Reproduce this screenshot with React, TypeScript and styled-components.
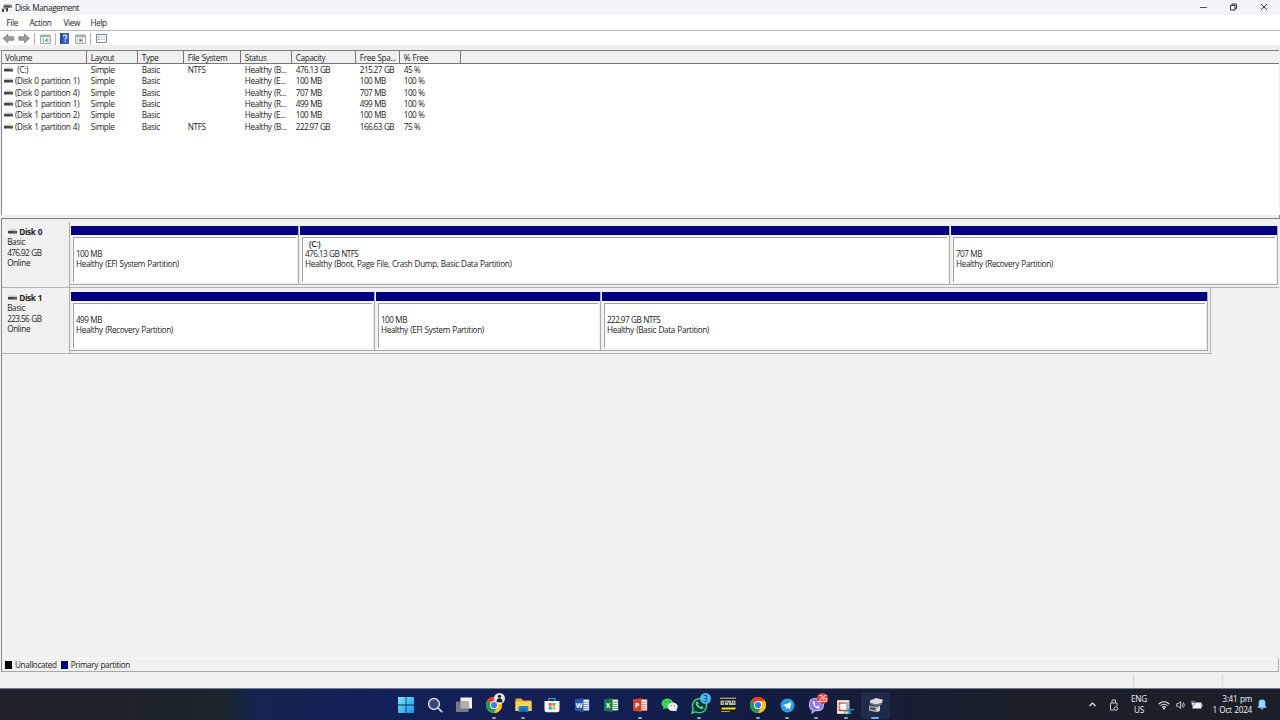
import React from 'react';
import styled, { createGlobalStyle, css } from 'styled-components';

const GlobalStyle = createGlobalStyle`
  * {
    box-sizing: border-box;
  }
  body {
    margin: 0;
    background: #f0f0f0;
    overflow: hidden;
  }
`;

const Screen = styled.div`
  width: 1280px;
  height: 720px;
  display: flex;
  flex-direction: column;
  background: #f0f0f0;
  color: #1c1c1c;
  font-family: 'Open Sans', 'Noto Sans', sans-serif;
  font-size: 8.2px;
  letter-spacing: -0.36px;
  word-spacing: 0.6px;
  line-height: 10px;
  white-space: nowrap;
`;

const TitleBar = styled.div`
  height: 15px;
  flex: none;
  display: flex;
  align-items: center;
  padding: 0 0 0 2px;
  background: #f3f4f7;
`;

const Title = styled.span`
  margin-left: 3px;
`;

const WindowButtons = styled.div`
  margin-left: auto;
  display: flex;
  align-items: center;
  gap: 20px;
  padding: 0 11px 1px 0;
`;

const MenuBar = styled.div`
  height: 16px;
  flex: none;
  display: flex;
  align-items: center;
  padding: 0 0 0 6.5px;
  background: #fff;
  border-bottom: 1px solid #bcbcbc;
`;

const MenuItem = styled.span<{ $width: number }>`
  width: ${(p) => p.$width}px;
`;

const Toolbar = styled.div`
  height: 14px;
  flex: none;
  display: flex;
  align-items: center;
  padding: 1px 0 0 2px;
  background: #fff;
`;

const Divider = styled.i`
  width: 1px;
  height: 12px;
  margin: 0 4.5px 0 4px;
  background: #b4b4b4;
`;

const HelpGroup = styled.span`
  display: flex;
  align-items: center;
  gap: 6px;
`;

const VolumeList = styled.div`
  height: 169px;
  flex: none;
  margin: 5px 1px 0 1px;
  border-top: 1px solid #7c7c7c;
  border-left: 1px solid #8a8a8a;
  background: #fff;
`;

const columns = css`
  display: grid;
  grid-template-columns: 85px 51px 46px 57px 51px 64px 44px 61px 1fr;
`;

const HeaderRow = styled.div`
  ${columns}
  height: 13px;
  background: #f0f0f0;
  border-bottom: 1px solid #777;
`;

const HeaderCell = styled.div`
  padding: 1.6px 0 0 3.8px;
  border-right: 1px solid #777;
  &:first-child {
    padding-left: 3px;
  }
  &:last-child {
    border-right: 0;
  }
`;

const VolumeRow = styled.div`
  ${columns}
  height: 11.35px;
  padding-top: 0.8px;
`;

const VolumeCell = styled.div<{ $tight?: boolean }>`
  padding-left: 3.8px;
  display: flex;
  align-items: center;
  letter-spacing: ${(p) => (p.$tight ? '-0.6px' : 'inherit')};
  &:first-child {
    padding-left: 2px;
    gap: 2px;
  }
`;

const Splitter = styled.div`
  height: 4px;
  flex: none;
  margin: -4px 0 0 1px;
  background: #f0f0f0;
  border-right: 1px solid #8a8a8a;
  border-bottom: 1px solid #7c7c7c;
`;

const DiskPane = styled.div`
  flex: 1;
  margin: 0 1px;
  padding-top: 3px;
  border-left: 1px solid #8a8a8a;
  display: flex;
  flex-direction: column;
`;

const DiskRow = styled.div<{ $width?: number }>`
  display: flex;
  height: 66px;
  width: ${(p) => (p.$width ? `${p.$width}px` : '100%')};
  border-bottom: 1px solid #b2b2b2;
  border-right: ${(p) => (p.$width ? '1px solid #b2b2b2' : '0')};
`;

const DiskLabel = styled.div`
  width: 68px;
  height: 65px;
  flex: none;
  padding: 5.4px 0 0 5.2px;
  border-right: 1px solid #aaa;
  background: #f0f0f0;
  line-height: 10.1px;
`;

const DiskName = styled.div`
  display: flex;
  align-items: center;
  gap: 2px;
  font-weight: 700;
  padding-left: 1px;
`;

const Size = styled.div`
  letter-spacing: -0.6px;
`;

const Partitions = styled.div`
  display: flex;
  padding-top: 4px;
`;

const Partition = styled.div<{ $width: number }>`
  width: ${(p) => p.$width}px;
  height: 59px;
  display: flex;
  flex-direction: column;
  border-right: 1px solid #ababab;
  border-bottom: 1px solid #ababab;
`;

const PartitionBar = styled.div`
  height: 9px;
  margin-left: 1px;
  background: #000080;
`;

const PartitionBody = styled.div`
  flex: 1;
  margin: 2px 2px 2px 3px;
  padding-left: 2px;
  border-top: 1px solid #a0a0a0;
  border-left: 1px solid #a0a0a0;
  outline: 1px solid #fbfbff;
  background: #fff;
  line-height: 10.2px;
`;

const PartitionName = styled.div`
  height: 11.2px;
  padding: 0.5px 0 0 4px;
  font-weight: 600;
`;

const Legend = styled.div`
  margin-top: auto;
  height: 14px;
  display: flex;
  align-items: center;
  padding-left: 3px;
  border-top: 1px solid #f8f8f8;
  border-bottom: 1px solid #a8a8a8;
  border-right: 1px solid #a8a8a8;
`;

const Swatch = styled.i<{ $color: string }>`
  width: 7px;
  height: 8px;
  margin-right: 3px;
  background: ${(p) => p.$color};
`;

const LegendText = styled.span`
  margin-right: 4px;
`;

const StatusBar = styled.div`
  height: 16px;
  flex: none;
  display: flex;
  justify-content: flex-end;
  padding: 2px 0 1px;
`;

const StatusPanel = styled.div<{ $width: number }>`
  width: ${(p) => p.$width}px;
  border-left: 1px solid #d4d4d4;
`;

const Taskbar = styled.div`
  height: 32px;
  flex: none;
  display: flex;
  align-items: center;
  padding: 1px 9px 0 391px;
  border-top: 1px solid #6f7c92;
  background: linear-gradient(90deg, #20212b 0, #1c242c 225px, #16244d 250px, #14215a 370px, #131f52 620px, #121c42 760px, #171d32 900px, #1b202b 1010px, #1b1f2a 100%);
  color: #f3f3f5;
`;

const TaskItem = styled.div<{ $active?: boolean }>`
  position: relative;
  width: 29.35px;
  height: 27px;
  flex: none;
  display: flex;
  align-items: center;
  justify-content: center;
  border-radius: 3px;
  background: ${(p) => (p.$active ? '#202a4c' : 'transparent')};
`;

const RunningMark = styled.i<{ $active?: boolean }>`
  position: absolute;
  bottom: 0;
  width: ${(p) => (p.$active ? 8 : 4)}px;
  height: 2px;
  border-radius: 1px;
  background: ${(p) => (p.$active ? '#67b8e8' : '#9aa0ae')};
`;

const Badge = styled.span<{ $color: string; $dark?: boolean }>`
  position: absolute;
  top: 1px;
  right: 3px;
  min-width: 11px;
  height: 11px;
  border-radius: 6px;
  background: ${(p) => p.$color};
  color: ${(p) => (p.$dark ? '#12304a' : '#fff')};
  font-size: 8.5px;
  line-height: 11px;
  text-align: center;
`;

const Tray = styled.div`
  margin-left: auto;
  display: flex;
  align-items: center;
  padding-bottom: 1px;
`;

const TrayText = styled.div<{ $width: number; $align: string }>`
  width: ${(p) => p.$width}px;
  display: flex;
  flex-direction: column;
  align-items: ${(p) => p.$align};
  line-height: 10.5px;
  letter-spacing: -0.25px;
`;

const TraySlot = styled.div<{ $width: number }>`
  width: ${(p) => p.$width}px;
  display: flex;
  justify-content: center;
`;

const DriveIcon = () => (
  <svg width="9" height="6" viewBox="0 0 9 6">
    <path d="M1 .5h7l1 1.500H0z" fill="#c3c6c4" />
    <path d="M0 2h9v2.500H0z" fill="#414745" />
    <path d="M6 2.500h2v1H6z" fill="#3d9b56" />
  </svg>
);

const AppIcon = () => (
  <svg width="10" height="10" viewBox="0 0 10 10">
    <path d="M2.500 1h6l1.300 2H1.500z" fill="#b4b7b7" />
    <path d="M1.500 2.600h8.300v2H1.500z" fill="#3b403e" />
    <path d="M.5 5h5l.8 1.400H0z" fill="#aaa" />
    <path d="M0 6h2v3H0zM4 5h2v3.500H4z" fill="#454a49" />
    <path d="M7.500 3h1.400v.9H7.500z" fill="#3fae5d" />
  </svg>
);

const Arrow = ({ right }: { right?: boolean }) => (
  <svg width="14" height="11" viewBox="0 0 14 11">
    <path
      d={right ? 'M13.500 5.500l-5-4.500v2.700H2.800v3.600h5.700V10z' : 'M1 5.500l5-4.500v2.700h5.700v3.600H6V10z'}
      fill="#9c9c9c"
      stroke="#7d7d7d"
      strokeWidth=".7"
    />
  </svg>
);

const PanelIcon = ({ right }: { right?: boolean }) => (
  <svg width="11" height="10" viewBox="0 0 11 10">
    <path d="M.5 1h10v8.500H.5z" fill="#f7f8f7" stroke="#8f979e" strokeWidth=".8" />
    <path d="M.5 1h10v2H.5z" fill="#a3adb7" />
    <path d={right ? 'M7.500 3.300v6M1.500 5h2M1.500 7h2' : 'M3.500 3.300v6M8.500 5H10M8.500 7H10M1.500 5h1M1.500 7h1'} stroke="#989fa6" strokeWidth=".8" />
    <path d={right ? 'M4.500 4v4.500L7.200 6.200z' : 'M7.500 4v4.500L4.800 6.200z'} fill="#45a145" />
  </svg>
);

const HelpIcon = () => (
  <svg width="9" height="11" viewBox="0 0 9 11">
    <path d="M0 0h9v11H0z" fill="#3c5fc0" />
    <path d="M0 0h2v11H0z" fill="#2b478f" />
    <path d="M3.400 3.600c0-2.200 3.300-2 3.300-.2 0 1.300-1.500 1.300-1.500 3M5.200 7.800v1.200" stroke="#fff" strokeWidth="1.100" fill="none" />
  </svg>
);

const ListIcon = () => (
  <svg width="11" height="9" viewBox="0 0 11 9">
    <path d="M.5.5h10v8H.5z" fill="#fff" stroke="#7f868c" />
    <path d="M2 3h1.500M2 5.500h1.500" stroke="#3f83d0" />
    <path d="M4.500 3H9M4.500 5.500H9" stroke="#c0ccd8" />
  </svg>
);

const Chrome = () => (
  <svg width="16" height="16" viewBox="0 0 16 16">
    <circle cx="8" cy="8" r="8" fill="#fbc116" />
    <path d="M8 8 1.070 4A8 8 0 0 1 14.930 4z" fill="#e33b2e" />
    <path d="M8 8 1.070 4A8 8 0 0 0 8 16l3.460-6z" fill="#229a4b" />
    <path d="M8 4h6.930A8 8 0 0 1 8 16l3.460-6z" fill="#fbc116" />
    <circle cx="8" cy="8" r="4" fill="#fff" />
    <circle cx="8" cy="8" r="3.100" fill="#3b7de8" />
  </svg>
);

const Office = ({ letter, dark, light }: { letter: string; dark: string; light: string }) => (
  <svg width="16" height="16" viewBox="0 0 16 16">
    <path d="M8 2.500h7v11H8z" fill="#f4f6f8" stroke={light} strokeWidth=".6" />
    <path d="M9.500 5.200h4.500M9.500 7.400h4.500M9.500 9.600h4.500M9.500 11.600h4.500" stroke={light} strokeWidth=".9" />
    <path d="M1 2.300 9.500 1v14L1 13.700z" fill={dark} />
    <text x="5.200" y="10.600" fill="#fff" fontSize="7" fontWeight="700" textAnchor="middle" letterSpacing="0">
      {letter}
    </text>
  </svg>
);

const StartIcon = () => (
  <svg width="16" height="16" viewBox="0 0 16 16">
    <defs>
      <linearGradient id="start" x1="0" y1="0" x2="1" y2="1">
        <stop offset="0" stopColor="#7ae4fb" />
        <stop offset="1" stopColor="#1497e8" />
      </linearGradient>
    </defs>
    <path d="M0 0h7.600v7.600H0zM8.400 0H16v7.600H8.400zM0 8.400h7.600V16H0zM8.400 8.400H16V16H8.400z" fill="url(#start)" />
  </svg>
);

const SearchIcon = () => (
  <svg width="16" height="16" viewBox="0 0 16 16">
    <circle cx="7" cy="7" r="5.400" fill="#3b4674" stroke="#d9dce4" strokeWidth="1.500" />
    <path d="m11 11 3.700 3.700" stroke="#d9dce4" strokeWidth="1.700" strokeLinecap="round" />
  </svg>
);

const TaskViewIcon = () => (
  <svg width="16" height="16" viewBox="0 0 16 16">
    <path d="M4.500 .5H16v11H4.500z" fill="#f0f0f1" />
    <path d="M0 4.500h12.500V15H0z" fill="#77797f" />
    <path d="M4.500 4.500h8v7h-8z" fill="#adaeb2" />
  </svg>
);

const FolderIcon = () => (
  <svg width="17" height="16" viewBox="0 0 17 16">
    <path d="M.5 1.500h6l1.500 2h8.500V14H.5z" fill="#eda928" />
    <path d="M.5 4.500h16V14H.5z" fill="#ffd35a" />
    <path d="M3.500 15V10.500q0-1.500 1.500-1.500h7q1.500 0 1.500 1.500V15z" fill="#1e80d0" />
    <path d="M5.500 12h6v3h-6z" fill="#1365ad" />
  </svg>
);

const StoreIcon = () => (
  <svg width="16" height="16" viewBox="0 0 16 16">
    <path d="M5 4V1.500h6V4" fill="none" stroke="#3ba7e5" strokeWidth="1.200" />
    <path d="M.5 4h15v9q0 2.300-2.300 2.300H2.800Q.5 15.300.5 13z" fill="#f4f5f7" />
    <path d="M4.800 6h2.900v2.900H4.800z" fill="#ea5a32" />
    <path d="M8.400 6h2.900v2.900H8.400z" fill="#7cb62d" />
    <path d="M4.800 9.600h2.900v2.900H4.800z" fill="#23a1e4" />
    <path d="M8.400 9.600h2.900v2.900H8.400z" fill="#f7b51a" />
  </svg>
);

const WeChatIcon = () => (
  <svg width="17" height="16" viewBox="0 0 17 16">
    <path d="M1.800 12.200 2.500 10A5.800 4.900 0 1 1 6 11.200z" fill="#3fd15c" />
    <ellipse cx="11.700" cy="9.800" rx="5" ry="4.200" fill="#e9eeec" />
    <path d="m15.500 11.500.2 3-2.800-1.300z" fill="#e9eeec" />
    <path d="M4.200 5h1.200M8 5h1.200" stroke="#17682d" strokeWidth="1.100" />
    <path d="M9.500 8.800h1M13 8.800h1" stroke="#69736e" />
  </svg>
);

const WhatsAppIcon = () => (
  <svg width="17" height="17" viewBox="0 0 17 17">
    <path d="m1 16 1.200-4.200A7 7 0 1 1 5 14.800z" fill="#14294b" stroke="#38d366" strokeWidth="1.500" />
    <path d="M5.500 4.600 7 4.500l.8 2-.8 1q.9 1.700 2.600 2.500l1-1.100 2 .9q.1 2.100-2 2.300C7.600 11.900 4.500 8.500 4.600 6z" fill="#45dc72" />
  </svg>
);

const ChartAppIcon = () => (
  <svg width="16" height="16" viewBox="0 0 16 16">
    <path d="M0 0h16v16H0z" fill="#16171a" />
    <path d="M0 1.200h16" stroke="#d8d8c0" />
    <path d="M.5 3.500h15v4.500H.5z" fill="#b9b9b5" />
    <path d="M4.500 3.500V8M8.500 5.500V8M11.500 3.500v2.500M2 5.800h1.500M6 5.200h1.500M13 5.800h1.500" stroke="#24252a" strokeWidth=".9" />
    <path d="M2 10.500h14l-1 2H1z" fill="#e7e321" />
    <path d="M1 14.500h9" stroke="#a5a430" strokeWidth="1.200" />
  </svg>
);

const TelegramIcon = () => (
  <svg width="15" height="15" viewBox="0 0 15 15">
    <circle cx="7.500" cy="7.500" r="7" fill="#2aa0da" />
    <path d="m2.800 7.300 8.600-3.400-1.500 7.500-2.600-1.800-1.300 1.300-.3-2.500z" fill="#fff" />
    <path d="m5.800 8.300 4-2.700-2.900 3.300" fill="#b5d8ec" />
  </svg>
);

const ViberIcon = () => (
  <svg width="17" height="17" viewBox="0 0 17 17">
    <path d="M8.500 1.200C3 1.200 1.500 3 1.500 7.500c0 3 .8 4.700 2.700 5.500v3l2.700-2.400c6.400.3 8.600-1.200 8.600-6.100 0-4.500-1.500-6.300-7-6.300z" fill="#8a76ee" stroke="#c4b9fb" strokeWidth="1.100" />
    <path d="m4.800 4.300 1.300-.2 1 2-.8 1q.8 1.800 2.500 2.500l1-.8 1.900 1.200-.5 1.500C7.800 12 4.300 8 4.800 4.300z" fill="#fff" />
    <path d="M9 4.300q3 .2 3.200 3.200" fill="none" stroke="#fff" />
  </svg>
);

const SnipIcon = () => (
  <svg width="17" height="21" viewBox="0 0 17 21">
    <path d="M.5 5.500h11.500v13H.5z" fill="#f6f1ef" stroke="#d0cfd4" />
    <path d="M2.500 8h7.500v7.500H2.500z" fill="#fff" stroke="#d64d35" strokeWidth="1.600" />
    <path d="M4.500 7v1.500M7.500 7v1.500M1.500 10.500h2M1.500 13h2" stroke="#fff" strokeWidth=".6" />
    <path d="M9 7h3v8H9z" fill="#a8b3bc" />
    <path d="M10.500 15 17 14.500M11 14.500l3 4.500" stroke="#2588c7" strokeWidth="1.600" />
    <circle cx="9.500" cy="17.500" r="1.700" fill="#e9f4fb" stroke="#2588c7" />
  </svg>
);

const DiskToolIcon = () => (
  <svg width="17" height="17" viewBox="0 0 17 17">
    <path d="m3 3.500 6-2.500 7 1.800-1.200 3.400-6.300 1.200-5.500-1.600z" fill="#d8dbdc" />
    <path d="m3 5.800 5.500 1.600 6.300-1.200v1.500L8.500 9 3 7.300z" fill="#767c80" />
    <path d="m2 8.500 8 1.200v5.500l-8-1.500z" fill="#9ca2a5" />
    <path d="m10 9.700 3-.9v5l-3 1.400z" fill="#d6d8d9" />
    <path d="m3.500 10.300 4.500.8v2l-4.500-.8z" fill="#40474b" />
  </svg>
);

const ProfileBadge = () => (
  <svg width="11" height="11" viewBox="0 0 10 10">
    <circle cx="5" cy="5" r="5" fill="#e8e8e8" />
    <circle cx="5" cy="3" r="1.500" fill="#202020" />
    <path d="M2.300 8.500q0-3.700 2.700-3.700t2.700 3.700z" fill="#202020" />
  </svg>
);

const ProfileSlot = styled.span`
  position: absolute;
  top: 1px;
  right: 3px;
  display: flex;
`;

const taskItems: {
  id: string;
  icon: React.ReactNode;
  running?: boolean;
  active?: boolean;
  overlay?: React.ReactNode;
}[] = [
  { id: 'start', icon: <StartIcon /> },
  { id: 'search', icon: <SearchIcon /> },
  { id: 'taskview', icon: <TaskViewIcon /> },
  { id: 'chrome-profile', icon: <Chrome />, running: true, overlay: <ProfileSlot><ProfileBadge /></ProfileSlot> },
  { id: 'explorer', icon: <FolderIcon />, running: true },
  { id: 'store', icon: <StoreIcon /> },
  { id: 'word', icon: <Office letter="W" dark="#2858a8" light="#5b86c9" /> },
  { id: 'excel', icon: <Office letter="X" dark="#16794a" light="#3c9a68" /> },
  { id: 'powerpoint', icon: <Office letter="P" dark="#cf4327" light="#df7157" />, running: true },
  { id: 'wechat', icon: <WeChatIcon /> },
  { id: 'whatsapp', icon: <WhatsAppIcon />, running: true, overlay: <Badge $color="#4db8ef" $dark>3</Badge> },
  { id: 'charts', icon: <ChartAppIcon /> },
  { id: 'chrome', icon: <Chrome />, running: true },
  { id: 'telegram', icon: <TelegramIcon />, running: true },
  { id: 'viber', icon: <ViberIcon />, running: true, overlay: <Badge $color="#e9433f">26</Badge> },
  { id: 'snip', icon: <SnipIcon />, running: true },
  { id: 'diskmgmt', icon: <DiskToolIcon />, running: true, active: true },
];

const headers = ['Volume', 'Layout', 'Type', 'File System', 'Status', 'Capacity', 'Free Spa...', '% Free', ''];

const volumes = [
  ['\u00a0(C:)', 'Simple', 'Basic', 'NTFS', 'Healthy (B...', '476.13 GB', '215.27 GB', '45 %'],
  ['(Disk 0 partition 1)', 'Simple', 'Basic', '', 'Healthy (E...', '100 MB', '100 MB', '100 %'],
  ['(Disk 0 partition 4)', 'Simple', 'Basic', '', 'Healthy (R...', '707 MB', '707 MB', '100 %'],
  ['(Disk 1 partition 1)', 'Simple', 'Basic', '', 'Healthy (R...', '499 MB', '499 MB', '100 %'],
  ['(Disk 1 partition 2)', 'Simple', 'Basic', '', 'Healthy (E...', '100 MB', '100 MB', '100 %'],
  ['(Disk 1 partition 4)', 'Simple', 'Basic', 'NTFS', 'Healthy (B...', '222.97 GB', '166.63 GB', '75 %'],
];

const disks = [
  {
    name: 'Disk 0',
    size: '476.92 GB',
    parts: [
      { width: 229, size: '100 MB', status: 'Healthy (EFI System Partition)' },
      { width: 651, name: '(C:)', size: '476.13 GB NTFS', status: 'Healthy (Boot, Page File, Crash Dump, Basic Data Partition)' },
      { width: 328, size: '707 MB', status: 'Healthy (Recovery Partition)' },
    ],
  },
  {
    name: 'Disk 1',
    size: '223.56 GB',
    width: 1209,
    parts: [
      { width: 305, size: '499 MB', status: 'Healthy (Recovery Partition)' },
      { width: 226, size: '100 MB', status: 'Healthy (EFI System Partition)' },
      { width: 607, size: '222.97 GB NTFS', status: 'Healthy (Basic Data Partition)' },
    ],
  },
];

const App: React.FC = () => {
  return (
    <>
      <GlobalStyle />
      <Screen>
        <TitleBar>
          <AppIcon />
          <Title>Disk Management</Title>
          <WindowButtons>
            <svg width="10" height="10" viewBox="0 0 10 10">
              <path d="M1 5.500h7" stroke="#555" />
            </svg>
            <svg width="10" height="10" viewBox="0 0 10 10">
              <path d="M1.500 3.500h4.500V8H1.500zM3 3.300V2h4.500v4.500H6.300" fill="none" stroke="#333" />
            </svg>
            <svg width="10" height="10" viewBox="0 0 10 10">
              <path d="m2 2 6 6M8 2 2 8" stroke="#333" />
            </svg>
          </WindowButtons>
        </TitleBar>
        <MenuBar>
          <MenuItem $width={23}>File</MenuItem>
          <MenuItem $width={34}>Action</MenuItem>
          <MenuItem $width={27}>View</MenuItem>
          <MenuItem $width={28}>Help</MenuItem>
        </MenuBar>
        <Toolbar>
          <Arrow />
          <Arrow right />
          <Divider />
          <PanelIcon />
          <Divider />
          <HelpGroup>
            <HelpIcon />
            <PanelIcon right />
          </HelpGroup>
          <Divider />
          <ListIcon />
        </Toolbar>

        <VolumeList>
          <HeaderRow>
            {headers.map((h) => (
              <HeaderCell key={h}>{h}</HeaderCell>
            ))}
          </HeaderRow>
          {volumes.map((row) => (
            <VolumeRow key={row[0]}>
              {row.map((cell, i) => (
                <VolumeCell key={i} $tight={i > 4}>
                  {i === 0 && <DriveIcon />}
                  {cell}
                </VolumeCell>
              ))}
            </VolumeRow>
          ))}
        </VolumeList>
        <Splitter />

        <DiskPane>
          {disks.map((disk) => (
            <DiskRow key={disk.name} $width={disk.width}>
              <DiskLabel>
                <DiskName>
                  <DriveIcon />
                  {disk.name}
                </DiskName>
                <div>Basic</div>
                <Size>{disk.size}</Size>
                <div>Online</div>
              </DiskLabel>
              <Partitions>
                {disk.parts.map((part, i) => (
                  <Partition key={i} $width={part.width}>
                    <PartitionBar />
                    <PartitionBody>
                      <PartitionName>{part.name}</PartitionName>
                      <Size>{part.size}</Size>
                      <div>{part.status}</div>
                    </PartitionBody>
                  </Partition>
                ))}
              </Partitions>
            </DiskRow>
          ))}
          <Legend>
            <Swatch $color="#000" />
            <LegendText>Unallocated</LegendText>
            <Swatch $color="#000080" />
            <LegendText>Primary partition</LegendText>
          </Legend>
        </DiskPane>

        <StatusBar>
          <StatusPanel $width={89} />
          <StatusPanel $width={58} />
        </StatusBar>

        <Taskbar>
          {taskItems.map((item) => (
            <TaskItem key={item.id} $active={item.active}>
              {item.icon}
              {item.overlay}
              {item.running && <RunningMark $active={item.active} />}
            </TaskItem>
          ))}
          <Tray>
            <TraySlot $width={20}>
              <svg width="9" height="9" viewBox="0 0 9 9">
                <path d="m1.500 6 3-3 3 3" fill="none" stroke="#eee" strokeWidth="1.200" />
              </svg>
            </TraySlot>
            <TraySlot $width={24}>
              <svg width="10" height="12" viewBox="0 0 10 12">
                <path d="M3 4V1h3.500v3M1.500 4H8v3M1.500 4v7H5" fill="none" stroke="#c9cacd" />
                <circle cx="7" cy="9.500" r="1.800" fill="none" stroke="#c9cacd" />
              </svg>
            </TraySlot>
            <TrayText $width={26} $align="center">
              <span>ENG</span>
              <span>US</span>
            </TrayText>
            <TraySlot $width={24}>
              <svg width="12" height="10" viewBox="0 0 12 10">
                <path d="M.8 4q5.200-4.600 10.400 0M2.500 5.700q3.500-3 7 0M4.200 7.400q1.800-1.500 3.600 0" fill="none" stroke="#e9e9ec" strokeWidth="1.100" />
                <circle cx="6" cy="8.600" r="1" fill="#e9e9ec" />
              </svg>
            </TraySlot>
            <TraySlot $width={10}>
              <svg width="11" height="10" viewBox="0 0 11 10">
                <path d="M.8 3.500h1.700L5 1.200v7.600L2.500 6.500H.8zM6.500 3.300q1.300 1.700 0 3.400M8 2q2.400 3 0 6" fill="none" stroke="#e0e0e4" strokeWidth=".9" />
              </svg>
            </TraySlot>
            <TraySlot $width={22}>
              <svg width="12" height="10" viewBox="0 0 12 10">
                <path d="M1.500 2.500h9v6h-9z" fill="#f3f3f3" />
                <path d="M10.500 4.500h1v2h-1z" fill="#ddd" />
                <path d="M1 .8v1.700M3 .8v1.700" stroke="#f3f3f3" strokeWidth=".8" />
                <path d="M.3 2.500h3.600v1.700L2.100 5.700.3 4.200z" fill="#f3f3f3" stroke="#3a404c" strokeWidth=".6" />
              </svg>
            </TraySlot>
            <TrayText $width={44} $align="flex-end">
              <span>3:41 pm</span>
              <span>1 Oct 2024</span>
            </TrayText>
            <TraySlot $width={19}>
              <svg width="10" height="11" viewBox="0 0 10 11">
                <path d="M5 .5a3.300 3.300 0 0 1 3.300 3.300V6.500l1.200 2.200H.5l1.200-2.200V3.800A3.300 3.300 0 0 1 5 .5z" fill="#8bdcfb" />
                <path d="M3.500 9.300h3q-.3 1.200-1.500 1.200t-1.500-1.200z" fill="#8bdcfb" />
              </svg>
            </TraySlot>
          </Tray>
        </Taskbar>
      </Screen>
    </>
  );
};

export default App;
